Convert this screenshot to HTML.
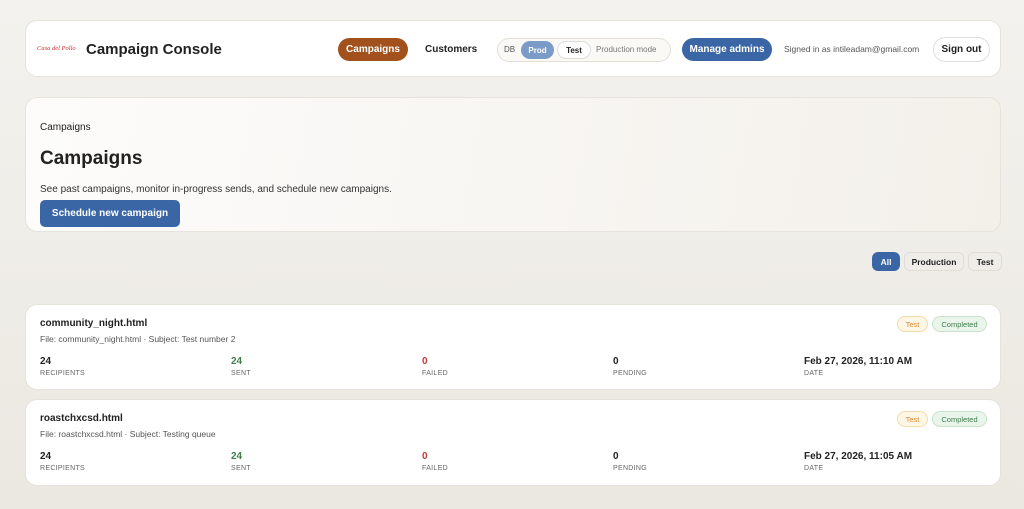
<!DOCTYPE html>
<html><head><style>
*{box-sizing:border-box;margin:0;padding:0}
body{width:1024px;height:509px;background:linear-gradient(180deg,#f3f2ee,#ebe8e1);font-family:"Liberation Sans",sans-serif;color:#222;position:relative;overflow:hidden}
.abs{position:absolute;line-height:1.2}
.card{position:absolute;left:25px;width:976px;background:#fff;border:1px solid #e6e3dc;border-radius:12px}
.pill{position:absolute;border-radius:14px;font-size:10px;font-weight:bold;display:flex;align-items:center;justify-content:center;line-height:1;padding-top:1px}
.num{position:absolute;font-size:10px;font-weight:bold;line-height:1.2}
.lab{position:absolute;font-size:7px;color:#666;letter-spacing:.3px;line-height:1.2}
</style></head><body>
<div class="card" style="top:20px;height:57px">
 <div class="abs" style="left:11px;top:24px;font-family:'Liberation Serif',serif;font-style:italic;font-size:6.5px;color:#c8302c">Casa del Pollo</div>
 <div class="abs" style="left:60px;top:20px;font-size:15px;font-weight:bold">Campaign Console</div>
 <div class="pill" style="left:312px;top:17px;width:70px;height:23px;background:#a2501c;color:#fff">Campaigns</div>
 <div class="abs" style="left:399px;top:23px;font-size:10px;font-weight:bold;color:#222">Customers</div>
 <div class="abs" style="left:471px;top:17px;width:174px;height:24px;border:1px solid #e3e0d8;border-radius:12px;background:#faf9f6"></div>
 <div class="abs" style="left:478px;top:24px;font-size:8px;color:#555">DB</div>
 <div class="pill" style="left:495px;top:20px;width:33px;height:18px;background:#7b9cc9;color:#fff;font-size:8px">Prod</div>
 <div class="pill" style="left:531px;top:20px;width:34px;height:18px;background:#fff;border:1px solid #ddd;color:#222;font-size:8px">Test</div>
 <div class="abs" style="left:570px;top:24px;font-size:8px;color:#777">Production mode</div>
 <div class="pill" style="left:656px;top:17px;width:90px;height:23px;background:#3a66a6;color:#fff">Manage admins</div>
 <div class="abs" style="left:758px;top:23px;font-size:8.5px;color:#555">Signed in as intileadam@gmail.com</div>
 <div class="pill" style="left:907px;top:16px;width:57px;height:25px;background:#fff;border:1px solid #ddd;color:#222">Sign out</div>
</div>
<div class="card" style="top:97px;height:135px;background:linear-gradient(100deg,#fdfcfb,#f3f0ea)">
 <div class="abs" style="left:14px;top:24px;font-size:10px">Campaigns</div>
 <div class="abs" style="left:14px;top:50px;font-size:19px;font-weight:bold">Campaigns</div>
 <div class="abs" style="left:14px;top:86px;font-size:10px;color:#333">See past campaigns, monitor in-progress sends, and schedule new campaigns.</div>
 <div class="pill" style="left:14px;top:102px;width:140px;height:27px;background:#3a66a6;border-radius:5px;color:#fff">Schedule new campaign</div>
</div>
<div class="pill" style="left:872px;top:252px;width:28px;height:19px;background:#3a66a6;color:#fff;border-radius:6px;font-size:8.5px">All</div>
<div class="pill" style="left:904px;top:252px;width:60px;height:19px;background:#efede8;border:1px solid #e0ddd5;border-radius:6px;font-size:8.5px">Production</div>
<div class="pill" style="left:968px;top:252px;width:34px;height:19px;background:#efede8;border:1px solid #e0ddd5;border-radius:6px;font-size:8.5px">Test</div>

<div class="card" style="top:304px;height:86px">
 <div class="abs" style="left:14px;top:13px;font-size:10px;font-weight:bold">community_night.html</div>
 <div class="abs" style="left:14px;top:29px;font-size:8.5px;color:#555">File: community_night.html · Subject: Test number 2</div>
 <div class="pill" style="left:871px;top:11px;width:31px;height:16px;background:#fff7e6;border:1px solid #f4dca8;color:#d98a2c;font-size:7.5px;font-weight:normal">Test</div>
 <div class="pill" style="left:906px;top:11px;width:55px;height:16px;background:#e9f5ea;border:1px solid #c9e3cc;color:#3f7e4c;font-size:7.5px;font-weight:normal">Completed</div>
 <div class="num" style="left:14px;top:51px">24</div><div class="lab" style="left:14px;top:65px">RECIPIENTS</div>
 <div class="num" style="left:205px;top:51px;color:#3f7e4c">24</div><div class="lab" style="left:205px;top:65px">SENT</div>
 <div class="num" style="left:396px;top:51px;color:#c0393b">0</div><div class="lab" style="left:396px;top:65px">FAILED</div>
 <div class="num" style="left:587px;top:51px">0</div><div class="lab" style="left:587px;top:65px">PENDING</div>
 <div class="num" style="left:778px;top:51px">Feb 27, 2026, 11:10 AM</div><div class="lab" style="left:778px;top:65px">DATE</div>
</div>
<div class="card" style="top:399px;height:87px">
 <div class="abs" style="left:14px;top:13px;font-size:10px;font-weight:bold">roastchxcsd.html</div>
 <div class="abs" style="left:14px;top:29px;font-size:8.5px;color:#555">File: roastchxcsd.html · Subject: Testing queue</div>
 <div class="pill" style="left:871px;top:11px;width:31px;height:16px;background:#fff7e6;border:1px solid #f4dca8;color:#d98a2c;font-size:7.5px;font-weight:normal">Test</div>
 <div class="pill" style="left:906px;top:11px;width:55px;height:16px;background:#e9f5ea;border:1px solid #c9e3cc;color:#3f7e4c;font-size:7.5px;font-weight:normal">Completed</div>
 <div class="num" style="left:14px;top:51px">24</div><div class="lab" style="left:14px;top:65px">RECIPIENTS</div>
 <div class="num" style="left:205px;top:51px;color:#3f7e4c">24</div><div class="lab" style="left:205px;top:65px">SENT</div>
 <div class="num" style="left:396px;top:51px;color:#c0393b">0</div><div class="lab" style="left:396px;top:65px">FAILED</div>
 <div class="num" style="left:587px;top:51px">0</div><div class="lab" style="left:587px;top:65px">PENDING</div>
 <div class="num" style="left:778px;top:51px">Feb 27, 2026, 11:05 AM</div><div class="lab" style="left:778px;top:65px">DATE</div>
</div>
</body></html>
